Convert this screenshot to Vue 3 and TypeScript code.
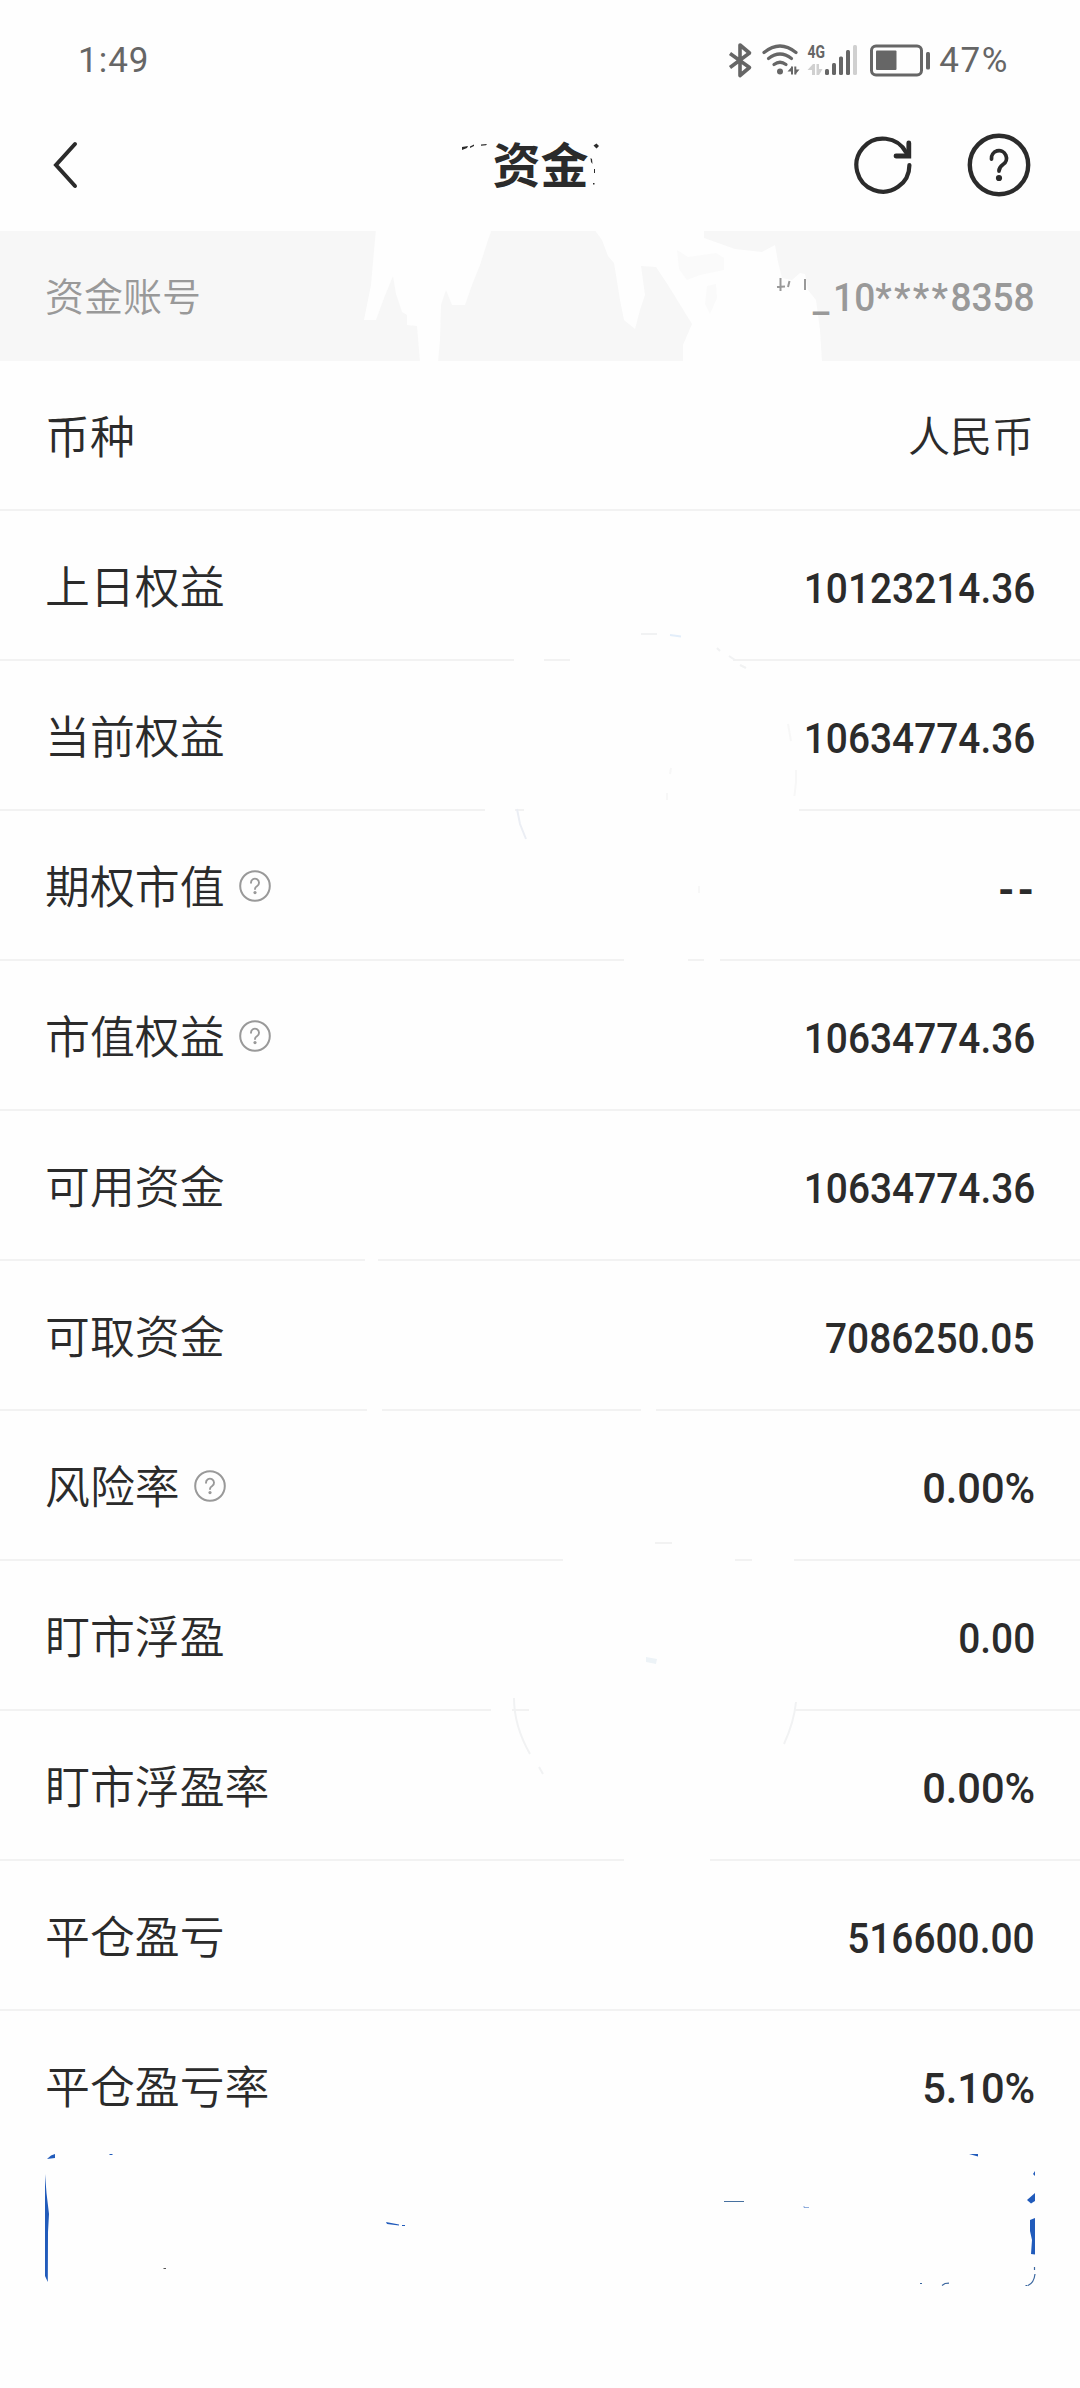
<script setup lang="ts">
interface FundRow {
  label: string
  value: string
  hint?: boolean
  kind?: 'cjk' | 'dash' | 'percent'
}

const rows: FundRow[] = [
  { label: '币种', value: '人民币', kind: 'cjk' },
  { label: '上日权益', value: '10123214.36' },
  { label: '当前权益', value: '10634774.36' },
  { label: '期权市值', value: '--', hint: true, kind: 'dash' },
  { label: '市值权益', value: '10634774.36', hint: true },
  { label: '可用资金', value: '10634774.36' },
  { label: '可取资金', value: '7086250.05' },
  { label: '风险率', value: '0.00%', hint: true, kind: 'percent' },
  { label: '盯市浮盈', value: '0.00' },
  { label: '盯市浮盈率', value: '0.00%', kind: 'percent' },
  { label: '平仓盈亏', value: '516600.00' },
  { label: '平仓盈亏率', value: '5.10%', kind: 'percent' },
]

// Blank stretches of the row dividers: [x start, x end, y]
const gaps: [number, number, number][] = [
  [514, 544, 660], [570, 733, 660],
  [485, 515, 810], [524, 799, 810],
  [624, 688, 960], [704, 720, 960],
  [365, 378, 1260],
  [367, 382, 1410], [641, 656, 1410],
  [563, 735, 1560], [752, 794, 1560],
  [491, 512, 1710], [529, 794, 1710],
  [624, 710, 1860],
]
</script>

<template>
  <div class="page">
    <header class="status">
      <span class="time">1:49</span>
      <div class="status-right">
        <svg class="status-icons" width="210" height="40" viewBox="725 40 210 40" fill="none">
          <path d="M731 53.5 L750.5 67.5 L741 75.5 V45 L750.5 53 L731 67.5" stroke="#666" stroke-width="3.6" stroke-linejoin="round" />
          <g stroke="#666" stroke-width="3.2" stroke-linecap="round">
            <path d="M765 52.5 Q781 39.500 797 52.500" />
            <path d="M769.500 58.500 Q781 49.500 792.500 58.500" />
            <path d="M775 64.500 Q781 60 787 64.500" />
          </g>
          <circle cx="781" cy="71.500" r="3" fill="#666" />
          <path d="M793 66.500 V74.500 M796.300 66.500 V74.500" stroke="#666" stroke-width="2" />
          <path d="M788.500 71.500 L793 66.500 V71.500 Z M800.500 69.500 L796.300 74.500 V69.500 Z" fill="#666" />
          <text x="808.500" y="58" class="net" textLength="17.500" lengthAdjust="spacingAndGlyphs">4G</text>
          <g fill="#d0d0d0">
            <path d="M808.500 70 L814 64 H816 V75 H813 V70 Z M823.500 69 L820 75 H817.500 V64 H820 V69 Z" />
            <rect x="854" y="45" width="4" height="30" rx="1.500" />
          </g>
          <g fill="#666">
            <rect x="826" y="69" width="4" height="6" rx="1.500" />
            <rect x="833" y="63" width="4" height="12" rx="1.500" />
            <rect x="840" y="56.500" width="4" height="18.500" rx="1.500" />
            <rect x="847" y="50" width="4" height="25" rx="1.500" />
            <rect x="877" y="50.500" width="20.500" height="19.500" rx="1" />
            <rect x="927" y="52" width="4" height="17.500" rx="1.500" />
          </g>
          <rect x="872.500" y="46" width="50" height="29" rx="4.500" stroke="#666" stroke-width="3" />
        </svg>
        <span class="battery">47%</span>
      </div>
    </header>

    <nav class="nav">
      <svg class="back" width="32" height="52" viewBox="0 0 32 52" fill="none">
        <path d="M25 5 L6 26 L25 47" stroke="#2b2b2b" stroke-width="4" stroke-linecap="round" stroke-linejoin="miter" />
      </svg>
      <h1 class="title">资金</h1>
      <div class="actions">
        <svg width="64" height="64" viewBox="0 0 64 64" fill="none" stroke="#2b2b2b" stroke-width="4.200" stroke-linecap="round">
          <path d="M58.400 32 A26.500 26.500 0 1 1 55.200 19.500" />
          <path d="M57.800 10 V23 H45" stroke-width="4.800" stroke-linejoin="miter" />
        </svg>
        <svg width="64" height="64" viewBox="0 0 64 64" fill="none" stroke="#2b2b2b" stroke-linecap="round">
          <circle cx="32" cy="32" r="29.200" stroke-width="4.400" />
          <path d="M24.500 26 A7.500 7.500 0 1 1 36 31.500 Q32 34.200 32 38" stroke-width="3.800" />
          <circle cx="32" cy="45" r="3.100" fill="#2b2b2b" stroke="none" />
        </svg>
      </div>
    </nav>

    <section class="account">
      <span class="account-label">资金账号</span>
      <span class="account-no"><span class="dash-low">_</span>10<span class="mask">****</span>8358</span>
    </section>

    <main>
      <div v-for="row in rows" :key="row.label" class="row">
        <span class="label">
          <span class="label-text">{{ row.label }}</span>
          <svg v-if="row.hint" width="32" height="32" viewBox="0 0 32 32" fill="none" stroke="#999" stroke-linecap="round">
            <circle cx="16" cy="16" r="14.800" stroke-width="2" />
            <path d="M12 12.800 A4 4 0 1 1 18.200 16 Q16 17.400 16 19" stroke-width="1.900" />
            <circle cx="16" cy="22.600" r="1.600" fill="#999" stroke="none" />
          </svg>
        </span>
        <span class="value" :class="row.kind">{{ row.value }}</span>
      </div>
    </main>

    <svg class="overlay" width="1080" height="2388" viewBox="0 0 1080 2388" fill="none">
      <g fill="#fefefe">
        <path d="M376 229 L373 262 371 285 364 320 376 320 384 298 393 276 396 294 402 312 407 315 407 325 417 326 420 362 438 362 440 340 441 305 446 290 452 305 465 305 472 285 480 265 488 240 492 229 Z" />
        <path d="M594 229 L602 240 608 256 614 263 616 275 620 300 624 320 635 329 640 310 645 295 641 266 656 267 668 285 692 324 683 345 683 362 822 362 820 330 816 300 808 290 805 274 800 273 792 280 782 278 778 262 775 245 762 252 735 249 704 238 704 229 Z" />
        <rect v-for="(g, i) in gaps" :key="i" :x="g[0]" :y="g[2] - 2" :width="g[1] - g[0]" height="4" />
      </g>
      <g fill="#fafafa">
        <path d="M677 250 L688 257 716 253 724 258 724 270 700 275 687 280 679 269 Z" />
        <path d="M707 286 L716 284 717 298 710 314 705 304 Z" />
      </g>

      <g fill="#2b2b2b">
        <path d="M462 147 L468 146 467 148 462 150 Z M470 146.500 L474 144.500 V146 L470 148 Z M481 144.500 L487 144 486 145.200 481 145.700 Z" />
        <path d="M593.500 145.500 L596.500 143.500 599 146 596.500 148.500 Z M590.500 158 L592 159 592.500 164 591 162 Z M594 169 H595 V173 H594 Z M593 183 H594.500 V184.500 H593 Z" />
      </g>
      <path d="M780.500 278 V291 M777 287 L785 286.500 M788 287 L789.500 281 M805 279 V290" stroke="#999" stroke-width="2" />

      <g stroke="#f1f2f3" stroke-width="2">
        <path d="M641 634 H657 M717 648 L720 651 M729 656 L735 660 M740 665 L746 668" />
        <path d="M670 635 L681 636.500" stroke="#e3eefa" />
        <path d="M788 724 L791 741 M796 770 V782 L794.500 796 M671 768 L670 774 M667 793 V800 M699 886 V893" stroke="#f7f7f7" />
        <path d="M517 809 L520 824 526 839" stroke="#ebeef4" />
        <path d="M655 1543 H672" stroke="#f2f2f2" />
        <path d="M514 1698 Q514 1726 530 1754 M539 1767 L543 1774 M796 1702 Q794 1722 784 1744" />
      </g>
      <path d="M646 1657 L657 1659 656 1664 646 1662 Z" fill="#edf3f7" />

      <g fill="#215bbb">
        <path d="M47 2159 L51 2155.500 55 2154 V2158 Z" />
        <path d="M45 2174 L46.500 2193 49 2214 48 2232 47.800 2282 45 2276 Z" />
        <path d="M109.500 2154 H112.500 V2155 H109.500 Z M386 2222 L399 2224.500 V2225.500 L387 2224 Z M402 2225 H405 V2226 H402 Z" />
        <path d="M969 2154 H978 V2156.500 Z M1033 2174 L1035 2171 V2176 Z" />
        <path d="M1027 2200 L1035 2193 V2201 L1031 2203.500 Z" />
        <path d="M1030 2220 L1035 2218 V2254.500 L1031 2254 1032 2240 1030 2231 Z" />
        <path d="M163.500 2268 H166 V2269 H163.500 Z" fill="#555" />
      </g>
      <path d="M724 2201.500 H744" stroke="#47709f" />
      <path d="M804 2206 V2207.500 H809" stroke="#215bbb" opacity="0.500" />
      <path d="M1034.500 2267 V2270 M1035 2274 Q1034 2283 1028 2285.500 M942 2285.500 L945 2283.500 949 2283.200 M920 2283.500 H922 M1025.500 2285.500 H1027.500" stroke="#3a669f" stroke-width="1.200" />
    </svg>
  </div>
</template>

<style>
body {
  margin: 0;
  background: #fefefe;
}
</style>

<style scoped>
.page {
  position: relative;
  width: 1080px;
  height: 2388px;
  overflow: hidden;
  background: #fefefe;
  color: #2b2b2b;
  font-family: Roboto, "Noto Sans CJK SC", sans-serif;
}

.status {
  box-sizing: border-box;
  height: 99px;
  padding: 22px 71px 0 78px;
  display: flex;
  justify-content: space-between;
  align-items: center;
  color: #666;
  font-size: 35px;
  line-height: 40px;
}

.time {
  letter-spacing: 1px;
}

.status-right {
  display: flex;
  align-items: center;
  gap: 5px;
}

.battery {
  letter-spacing: 1.600px;
}

.status-icons {
  display: block;
  margin-bottom: 2px;
}

.net {
  font: 700 18px Roboto, sans-serif;
  fill: #666;
}

.nav {
  box-sizing: border-box;
  height: 132px;
  padding: 0 49px 0 50px;
  display: grid;
  grid-template-columns: 1fr auto 1fr;
  align-items: center;
}

.title {
  margin: 0;
  padding-top: 3px;
  font-size: 48px;
  line-height: 60px;
  font-weight: 700;
}

.actions {
  display: flex;
  justify-content: flex-end;
  gap: 52px;
}

.account {
  box-sizing: border-box;
  height: 130px;
  padding: 0 45px;
  display: flex;
  justify-content: space-between;
  align-items: center;
  background: #f7f7f7;
  color: #999;
  font-size: 39px;
}

.account-label {
  padding-bottom: 4px;
  font-weight: 350;
}

.account-no {
  position: relative;
  z-index: 2;
  padding-top: 4px;
  font-weight: 500;
  transform: scaleX(0.95);
  transform-origin: right center;
}

.dash-low {
  letter-spacing: 4px;
}

.mask {
  letter-spacing: 2.500px;
}

.row {
  box-sizing: border-box;
  height: 150px;
  padding: 2px 45px 0;
  display: flex;
  justify-content: space-between;
  align-items: center;
  border-bottom: 2px solid #f2f2f2;
}

.row:last-child {
  border-bottom-color: transparent;
}

.label {
  display: flex;
  align-items: center;
  gap: 14px;
  font-size: 44.900px;
  font-weight: 350;
  line-height: 60px;
}

.label-text {
  padding-top: 6px;
}

.value {
  padding-top: 6px;
  font-size: 42px;
  line-height: 50px;
  font-weight: 500;
  transform: scaleX(0.925);
  transform-origin: right center;
}

.value.percent {
  transform: scaleX(0.99);
}

.value.cjk {
  padding-top: 4px;
  padding-right: 1px;
  font-weight: 350;
  transform: none;
}

.value.dash {
  padding-top: 9px;
  margin-right: -2px;
  font-weight: 700;
  letter-spacing: 3px;
  transform: none;
}

.overlay {
  position: absolute;
  left: 0;
  top: 0;
  z-index: 1;
  pointer-events: none;
}
</style>
